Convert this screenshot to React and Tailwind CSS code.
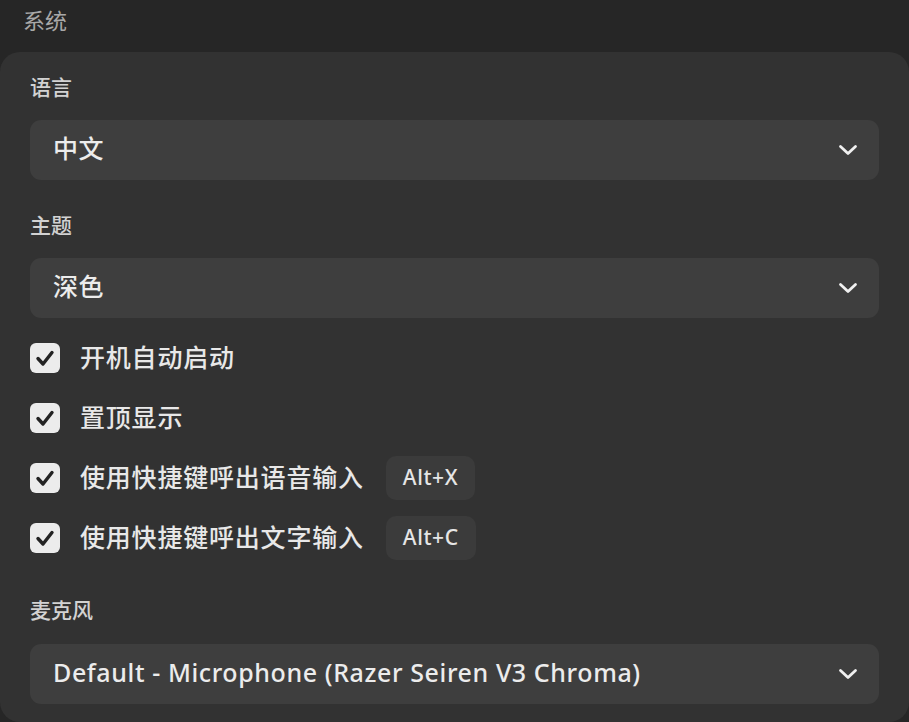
import { useState } from "react";

const font = { fontFamily: '"Noto Sans", "Noto Sans CJK SC", sans-serif' };

function Chevron() {
  return (
    <svg width="20" height="14" viewBox="0 0 20 14" fill="none">
      <path d="M2.5 3.5 L10 10.5 L17.5 3.5" stroke="#f0f0f0" strokeWidth="2.8" strokeLinecap="round" strokeLinejoin="round" />
    </svg>
  );
}

function Select({ value }) {
  return (
    <div className="flex h-[60px] items-center justify-between rounded-[11px] bg-[#3e3e3e] pl-[23px] pr-[21px]">
      <span className="-mt-[3px] text-[25px] font-medium tracking-[0.6px] text-[#ececec]">{value}</span>
      <Chevron />
    </div>
  );
}

function Label({ children, className = "" }) {
  return <div className={`text-[21px] leading-[28px] font-medium text-[#d2d2d2] ${className}`}>{children}</div>;
}

function Check({ label, keys, checked, onToggle }) {
  return (
    <div className="flex h-[44px] items-center">
      <button
        onClick={onToggle}
        className="flex h-[30px] w-[30px] items-center justify-center rounded-[6px] bg-[#ececec]"
      >
        {checked && (
          <svg width="30" height="30" viewBox="0 0 30 30" fill="none">
            <path d="M8 15.5 L13 21 L22 9.5" stroke="#232323" strokeWidth="3.4" strokeLinecap="round" strokeLinejoin="round" />
          </svg>
        )}
      </button>
      <span className="ml-[20px] text-[25px] font-medium tracking-[0.8px] text-[#e8e8e8]">{label}</span>
      {keys && (
        <span className="ml-[22px] flex h-[44px] items-center rounded-[10px] bg-[#3b3b3b] px-[17px] text-[21px] font-medium tracking-[0.6px] text-[#e6e6e6]">
          {keys}
        </span>
      )}
    </div>
  );
}

export default function App() {
  const [opts, setOpts] = useState({ boot: true, top: true, voice: true, text: true });
  const toggle = (k) => setOpts((p) => ({ ...p, [k]: !p[k] }));

  return (
    <div className="min-h-screen bg-[#262626]" style={font}>
      <div className="h-[52px] px-[23px] pt-[5px] text-[22px] leading-[30px] text-[#a8a8a8]">系统</div>
      <div className="rounded-[20px] bg-[#323232] px-[30px] pt-[21px] pb-[18px]">
        <Label>语言</Label>
        <div className="mt-[19px]">
          <Select value="中文" />
        </div>
        <Label className="mt-[31px]">主题</Label>
        <div className="mt-[19px]">
          <Select value="深色" />
        </div>
        <div className="mt-[18px] flex flex-col gap-[16px]">
          <Check label="开机自动启动" checked={opts.boot} onToggle={() => toggle("boot")} />
          <Check label="置顶显示" checked={opts.top} onToggle={() => toggle("top")} />
          <Check label="使用快捷键呼出语音输入" keys="Alt+X" checked={opts.voice} onToggle={() => toggle("voice")} />
          <Check label="使用快捷键呼出文字输入" keys="Alt+C" checked={opts.text} onToggle={() => toggle("text")} />
        </div>
        <Label className="mt-[36px]">麦克风</Label>
        <div className="mt-[20px]">
          <Select value="Default - Microphone (Razer Seiren V3 Chroma)" />
        </div>
      </div>
    </div>
  );
}
